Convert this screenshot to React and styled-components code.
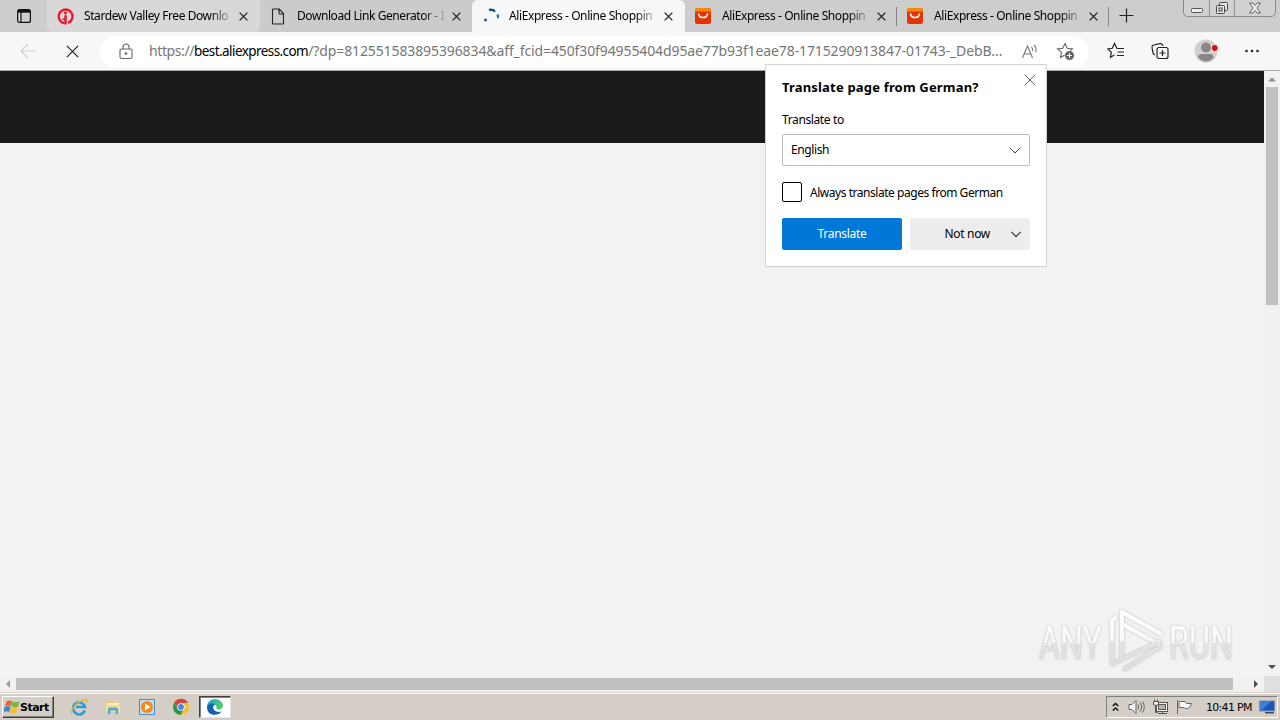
import React from 'react';
import styled, { createGlobalStyle } from 'styled-components';

const GlobalStyle = createGlobalStyle`
  * {
    box-sizing: border-box;
  }
  body {
    margin: 0;
    overflow: hidden;
    font-family: 'Noto Sans', 'Open Sans', sans-serif;
    font-size: 12px;
    color: #000;
  }
  svg {
    display: block;
    flex: none;
  }
  button {
    font: inherit;
    border: none;
    padding: 0;
    margin: 0;
  }
`;

const Desktop = styled.div`
  width: 1280px;
  height: 720px;
  display: flex;
  flex-direction: column;
  position: relative;
  overflow: hidden;
  background: #f2f2f2;
`;
const Text = styled.span`
  white-space: pre;
  letter-spacing: ${(p) => p.$spacing || 0}px;
`;

/* tab strip */
const TabStrip = styled.div`
  height: 32px;
  flex: none;
  display: flex;
  align-items: stretch;
  background: #cdcdcd;
`;
const TabMenu = styled.div`
  width: 47px;
  padding: 8px 0 0 16px;
`;
const Tab = styled.div`
  width: ${(p) => p.$width}px;
  display: flex;
  align-items: center;
  padding: 0 8px 0 10px;
  background: ${(p) => p.$bg || 'transparent'};
  border-radius: ${(p) => (p.$active ? '6px 6px 0 0' : '0 0 5px 5px')};
  border-right: 1px solid ${(p) => (p.$divider ? '#cdcdcd' : 'transparent')};
  position: relative;

  &::after {
    content: '';
    display: ${(p) => (p.$divider ? 'block' : 'none')};
    position: absolute;
    right: -1px;
    top: 7px;
    width: 1px;
    height: 19px;
    background: #858585;
  }
`;
const TabIcon = styled.div`
  width: 17px;
`;
const TabTitle = styled.div`
  width: 147px;
  margin: 0 8px 0 10px;
  line-height: 18px;
  white-space: nowrap;
  mask-image: linear-gradient(to right, #000 126px, transparent 151px);
`;
const NewTab = styled.div`
  padding: 8px 0 0 10px;
`;
const WindowButtons = styled.div`
  margin-left: auto;
  margin-right: 4px;
  width: 93px;
  height: 17px;
  display: flex;
  border: 1px solid #8a8a8a;
  border-top: none;
  border-radius: 0 0 5px 5px;
  background: #d1d1d1;
`;
const WindowButton = styled.div`
  width: ${(p) => p.$width}px;
  display: flex;
  justify-content: center;
  border-right: ${(p) => (p.$last ? 'none' : '1px solid #929292')};
`;

/* address bar */
const Toolbar = styled.div`
  height: 39px;
  flex: none;
  display: flex;
  align-items: center;
  background: #f7f7f7;
  border-bottom: 1px solid #a9a9a9;
  padding-left: 20px;
`;
const AddressBar = styled.div`
  width: 988px;
  height: 32px;
  margin-left: 21px;
  margin-top: 1px;
  border-radius: 16px;
  background: #fff;
  display: flex;
  align-items: center;
  padding-left: 18px;
`;
const Url = styled.div`
  width: 860px;
  margin-left: 15px;
  font-size: 14px;
  line-height: 20px;
  padding-bottom: 1px;
  color: #767676;
  white-space: nowrap;
`;
const Domain = styled(Text)`
  color: #000;
  font-size: 13.5px;
`;
const ToolIcon = styled.div`
  margin-left: ${(p) => p.$gap}px;
`;

/* page */
const Page = styled.div`
  height: 605px;
  flex: none;
  display: flex;
`;
const Content = styled.div`
  width: 1264px;
  background: #f2f2f2;
`;
const SiteHeader = styled.div`
  height: 72px;
  background: #1a1a1a;
`;
const VerticalScroll = styled.div`
  width: 16px;
  background: #f1f1f1;
  display: flex;
  flex-direction: column;
  align-items: center;
  justify-content: space-between;
  padding: 5px 0 7px;
`;
const VerticalThumb = styled.div`
  width: 12px;
  height: 218px;
  margin: 3px 0 auto;
  background: #c0c0c0;
`;
const HorizontalScroll = styled.div`
  height: 17px;
  flex: none;
  display: flex;
  align-items: center;
  background: #f1f1f1;
  padding-bottom: 2px;
`;
const HorizontalThumb = styled.div`
  width: 1217px;
  height: 12px;
  margin: 0 19px 0 4px;
  background: #c0c0c0;
`;
const Corner = styled.div`
  width: 16px;
  height: 17px;
  margin-left: auto;
  margin-bottom: -2px;
  background: #dfdfdf;
`;

/* translate popup */
const Popup = styled.div`
  position: absolute;
  left: 765px;
  top: 64px;
  width: 282px;
  height: 203px;
  padding: 13px 16px 16px;
  background: #fff;
  border: 1px solid #d2d2d2;
  display: flex;
  flex-direction: column;
`;
const PopupHeader = styled.div`
  display: flex;
  justify-content: space-between;
  height: 33px;
  align-items: flex-start;
`;
const Title = styled.h2`
  margin: 0;
  font-family: 'Noto Sans', sans-serif;
  font-size: 13px;
  font-weight: 700;
  line-height: 18px;
`;
const CloseIcon = styled.div`
  margin: -4px -6px 0 0;
`;
const Label = styled.label`
  line-height: 18px;
  margin-bottom: 5px;
`;
const Select = styled.div`
  height: 32px;
  flex: none;
  border: 1px solid #bcbcbc;
  border-radius: 2px;
  display: flex;
  align-items: center;
  justify-content: space-between;
  padding: 0 7px 1px 8px;
`;
const CheckRow = styled.div`
  display: flex;
  align-items: center;
  gap: 8px;
  margin: 16px 0;
  height: 20px;
`;
const Checkbox = styled.span`
  width: 20px;
  height: 20px;
  border: 1px solid #000;
  border-radius: 2px;
`;
const Buttons = styled.div`
  display: flex;
  gap: 8px;
`;
const Button = styled.button`
  width: 120px;
  height: 32px;
  display: flex;
  align-items: center;
  justify-content: ${(p) => (p.$primary ? 'center' : 'flex-end')};
  gap: 20px;
  padding-right: ${(p) => (p.$primary ? 0 : 8)}px;
  padding-bottom: 1px;
  border-radius: 2px;
  background: ${(p) => (p.$primary ? '#0078d7' : '#ededed')};
  color: ${(p) => (p.$primary ? '#fff' : '#000')};
`;

const Watermark = styled.div`
  position: absolute;
  left: 1032px;
  top: 606px;
`;

/* taskbar */
const Taskbar = styled.div`
  height: 28px;
  flex: none;
  display: flex;
  align-items: center;
  background: #d4cec6;
  border-top: 1px solid #fff;
  box-shadow: 0 -1px 0 #d6d2ca;
  padding: 0 2px 1px 2px;
`;
const StartButton = styled.div`
  width: 52px;
  height: 22px;
  display: flex;
  align-items: center;
  padding-left: 1px;
  font-family: 'DejaVu Sans', sans-serif;
  font-size: 11px;
  font-weight: 700;
  background: #d4cec6;
  border: 1px solid;
  border-color: #fff #404040 #404040 #fff;
  box-shadow: inset -1px -1px 0 #808080;
`;
const QuickLaunch = styled.div`
  display: flex;
  align-items: center;
  gap: 16px;
  margin: 0 0 0 16px;
`;
const RunningApp = styled.div`
  width: 32px;
  height: 22px;
  margin: 0 0 0 9px;
  display: flex;
  align-items: center;
  justify-content: center;
  background: #fff;
  border: 1px solid;
  border-color: #404040 #e8e4dc #e8e4dc #404040;
  box-shadow: inset 1px 1px 0 #808080;
`;
const Tray = styled.div`
  margin-left: auto;
  width: 172px;
  height: 22px;
  display: flex;
  align-items: center;
  border: 1px solid;
  border-color: #808080 #fff #fff #808080;
  padding-left: 5px;
`;
const Clock = styled.div`
  width: 50px;
  margin-left: 13px;
  font-family: 'DejaVu Sans', sans-serif;
  font-size: 11px;
`;

const Cross = ({ size = 9, color = '#222', width = 1.5 }) => (
  <svg width={size} height={size} viewBox="0 0 10 10" fill="none" stroke={color} strokeWidth={width}>
    <path d="M.7.7l8.6 8.6M9.3.7L.7 9.3" />
  </svg>
);

const Chevron = ({ color = '#444', width = 1.2, size = 14 }) => (
  <svg width={size} height={size} viewBox="0 0 14 14" fill="none" stroke={color} strokeWidth={width}>
    <path d="M1.5 4.5L7 10l5.5-5.5" />
  </svg>
);

const Arrow = ({ d, color = '#505050' }) => (
  <svg width="8" height="8" viewBox="0 0 8 8" fill={color}>
    <path d={d} />
  </svg>
);

const IGetIcon = () => (
  <svg width="17" height="17" viewBox="0 0 17 17" fill="none">
    <path d="M7.300 15.200A6.900 6.900 0 1 1 11 14.900" stroke="#f0122b" strokeWidth="2.300" />
    <path d="M8.500 7.300v9.200" stroke="#f0122b" strokeWidth="2.500" />
    <path d="M5.500 10.500q1.500 1.800 3 .8" stroke="#f0122b" strokeWidth="1.200" />
    <circle cx="8.500" cy="4.900" r="1.500" fill="#f0122b" />
  </svg>
);

const FileIcon = () => (
  <svg width="16" height="17" viewBox="0 0 16 17" fill="none" stroke="#222" strokeWidth="1.1">
    <path d="M3.200 1h6.100l4.200 4.500v9.800q0 .7-.7.7H3.200q-.7 0-.7-.7V1.700Q2.500 1 3.200 1M9 1v4.200q0 .8.8.8h3.700" />
  </svg>
);

const Spinner = () => (
  <svg width="17" height="17" viewBox="0 0 17 17" fill="none">
    <path d="M7 1.900q4-.8 6 1.800" stroke="#0c4a83" strokeWidth="2.200" />
    <path d="M15.300 6.500q1 1.500.6 3.500" stroke="#1c6cb3" strokeWidth="2.300" />
    <circle cx="3.500" cy="12" r="1.500" fill="#1d5788" />
  </svg>
);

const AliIcon = () => (
  <svg width="16" height="16" viewBox="0 0 16 16" fill="none">
    <rect width="16" height="16" rx="2.500" fill="#e43501" />
    <path d="M2.500 0h11Q16 0 16 2.500V3.500H0v-1Q0 0 2.500 0" fill="#f58a0b" />
    <path d="M3.500 6c1 4.800 8 4.800 9 0" stroke="#fff" strokeWidth="1.500" strokeLinecap="round" />
  </svg>
);

const STAR = 'M9 1.500l2.200 4.800 5.200.6-3.900 3.500 1 5.100L9 13l-4.500 2.500 1-5.100L1.600 6.900l5.200-.6z';

const tabs = [
  { title: 'Stardew Valley Free Downlo', icon: <IGetIcon />, bg: '#d8d8d8', width: 213, spacing: -0.42 },
  { title: 'Download Link Generator - I', icon: <FileIcon />, width: 212, bg: '#cbcbcb', spacing: -0.42 },
  { title: 'AliExpress - Online Shoppin', icon: <Spinner />, width: 213, bg: '#f7f7f7', active: true, spacing: -0.4 },
  { title: 'AliExpress - Online Shoppin', icon: <AliIcon />, width: 212, divider: true, spacing: -0.4 },
  { title: 'AliExpress - Online Shoppin', icon: <AliIcon />, width: 212, divider: true, spacing: -0.4 },
];

function TabBar() {
  return (
    <TabStrip>
      <TabMenu>
        <svg width="16" height="16" viewBox="0 0 16 16" fill="none" stroke="#111">
          <rect x="1.600" y="1.600" width="12.800" height="12.800" rx="2" strokeWidth="1.200" />
          <path d="M2 3.200h12" strokeWidth="3" />
          <path d="M5 4v10" strokeWidth="1.200" />
        </svg>
      </TabMenu>
      {tabs.map((tab, i) => (
        <Tab key={i} $width={tab.width} $bg={tab.bg} $active={tab.active} $divider={tab.divider}>
          <TabIcon>{tab.icon}</TabIcon>
          <TabTitle>
            <Text $spacing={tab.spacing}>{tab.title}</Text>
          </TabTitle>
          <Cross />
        </Tab>
      ))}
      <NewTab>
        <svg width="15" height="15" viewBox="0 0 15 15" stroke="#222" strokeWidth="1.200">
          <path d="M7.500.5v14M.5 7.500h14" />
        </svg>
      </NewTab>
      <WindowButtons>
        <WindowButton $width={26}>
          <svg width="14" height="16" viewBox="0 0 14 16" fill="#eee" stroke="#555">
            <rect x="1.500" y="8.500" width="11" height="4" rx="1" />
          </svg>
        </WindowButton>
        <WindowButton $width={25}>
          <svg width="14" height="16" viewBox="0 0 14 16" fill="#e6e6e6" stroke="#444">
            <rect x="4.500" y="2.500" width="8" height="8" rx="1" />
            <rect x="1.500" y="5.500" width="8" height="8" rx="1" />
            <rect x="4" y="8" width="3" height="3" />
          </svg>
        </WindowButton>
        <WindowButton $width={40} $last>
          <svg width="14" height="16" viewBox="0 0 14 16" fill="#eee" stroke="#555" strokeWidth=".9">
            <path d="M1.500 3h3.300L7 5.500 9.200 3h3.300L9 8l3.500 5H9.200L7 10.500 4.800 13H1.500L5 8z" />
          </svg>
        </WindowButton>
      </WindowButtons>
    </TabStrip>
  );
}

function NavBar() {
  return (
    <Toolbar>
      <svg width="17" height="16" viewBox="0 0 17 16" fill="none" stroke="#cfcfcf" strokeWidth="1.200">
        <path d="M16 8H1M8 1L1 8l7 7" />
      </svg>
      <ToolIcon $gap={29}>
        <Cross size={13} width={0.9} />
      </ToolIcon>
      <AddressBar>
        <svg width="16" height="18" viewBox="0 0 16 18" fill="none" stroke="#666" strokeWidth="1.100">
          <rect x="2" y="6" width="12" height="9.500" rx="1.500" />
          <path d="M5 6V4a3 3 0 0 1 6 0v2" />
          <circle cx="8" cy="10.500" r=".8" fill="#666" />
        </svg>
        <Url>
          <Text $spacing={-0.4}>https://</Text>
          <Domain $spacing={-0.57}>best.aliexpress.com</Domain>
          <Text $spacing={-0.11}>
            /?dp=812551583895396834&amp;aff_fcid=450f30f94955404d95ae77b93f1eae78-1715290913847-01743-_DebB...
          </Text>
        </Url>
        <ToolIcon $gap={12}>
          <svg width="18" height="18" viewBox="0 0 18 18" fill="none" stroke="#777" strokeWidth="1.100">
            <path d="M1.500 15L6.500 3l5 12M3.200 11h6.600M10.500 4q1.500 1.500 1 4M13 2q2.800 2.800 1.800 7" />
          </svg>
        </ToolIcon>
        <ToolIcon $gap={17}>
          <svg width="19" height="19" viewBox="0 0 19 19" fill="none" stroke="#666" strokeWidth="1.100">
            <path d={STAR} />
            <circle cx="13.500" cy="13.500" r="4.800" fill="#606060" stroke="#fff" strokeWidth=".6" />
            <path d="M13.500 11v5M11 13.500h5" stroke="#fff" />
          </svg>
        </ToolIcon>
      </AddressBar>
      <ToolIcon $gap={19}>
        <svg width="18" height="18" viewBox="0 0 18 18" fill="none" stroke="#222" strokeWidth="1.200">
          <path d="M12.500 6.500H10L7.500 1.500 5.300 6.300.8 6.900l3.500 3.300-.9 5.100 4.100-2.300M10 6.500h7M10.500 10H17M10 13.500h7" />
        </svg>
      </ToolIcon>
      <ToolIcon $gap={26}>
        <svg width="18" height="18" viewBox="0 0 18 18" fill="none" stroke="#222" strokeWidth="1.200">
          <path d="M4 13Q2.500 12.500 2 11L1 5.500Q.8 3.500 2.500 3L9 1.600Q11 1.300 11.600 3l.3 1" />
          <rect x="6" y="5.500" width="11" height="11" rx="2" fill="#f7f7f7" />
          <path d="M11.500 8v6M8.500 11h6" />
        </svg>
      </ToolIcon>
      <ToolIcon $gap={25}>
        <svg width="24" height="24" viewBox="0 0 24 24">
          <circle cx="12" cy="12" r="11.500" fill="#d2d0ce" />
          <circle cx="12" cy="8.500" r="5" fill="#8a8886" />
          <path d="M4 18.500q0-3.500 3.500-3.500h8.500q3.500 0 3.500 3.500Q16.500 22.500 12 22.500T4 18.500" fill="#8a8886" />
          <circle cx="20.800" cy="9" r="3.600" fill="#f7f7f7" />
          <circle cx="20.800" cy="9" r="2.900" fill="#d80d18" />
        </svg>
      </ToolIcon>
      <ToolIcon $gap={26}>
        <svg width="16" height="4" viewBox="0 0 16 4" fill="#222">
          <circle cx="2.500" cy="2" r="1.300" />
          <circle cx="8" cy="2" r="1.300" />
          <circle cx="13.500" cy="2" r="1.300" />
        </svg>
      </ToolIcon>
    </Toolbar>
  );
}

function TranslatePopup() {
  return (
    <Popup>
      <PopupHeader>
        <Title>
          <Text $spacing={0.18}>Translate page from German?</Text>
        </Title>
        <CloseIcon>
          <Cross size={12} width={0.8} color="#555" />
        </CloseIcon>
      </PopupHeader>
      <Label>
        <Text $spacing={-0.38}>Translate to</Text>
      </Label>
      <Select>
        <Text $spacing={-0.4}>English</Text>
        <Chevron width={1} />
      </Select>
      <CheckRow>
        <Checkbox />
        <Text $spacing={-0.46}>Always translate pages from German</Text>
      </CheckRow>
      <Buttons>
        <Button $primary>
          <Text $spacing={-0.3}>Translate</Text>
        </Button>
        <Button>
          <Text $spacing={-0.3}>Not now</Text>
          <Chevron size={12} width={1.500} />
        </Button>
      </Buttons>
    </Popup>
  );
}

const WatermarkText = styled.text`
  font-family: Roboto, sans-serif;
  font-size: 47px;
  font-weight: 400;
`;

function AnyRun() {
  return (
    <Watermark>
      <svg width="216" height="72" viewBox="0 0 216 72" fill="none">
        <defs>
          <linearGradient id="fade" x1="0" y1="0" x2="0" y2="1">
            <stop offset="0" stopColor="#fff" />
            <stop offset=".5" stopColor="#f8f8f8" />
            <stop offset=".52" stopColor="#e3e3e3" />
            <stop offset="1" stopColor="#dedede" />
          </linearGradient>
          <filter id="soft" x="-10%" y="-10%" width="120%" height="120%">
            <feDropShadow dx="0" dy="0" stdDeviation="1.300" floodColor="#8c8c8c" floodOpacity=".6" />
          </filter>
        </defs>
        <g filter="url(#soft)">
          <WatermarkText x="7" y="53" textLength="63" lengthAdjust="spacingAndGlyphs" fill="url(#fade)">
            ANY
          </WatermarkText>
          <WatermarkText x="137" y="53" textLength="64" lengthAdjust="spacingAndGlyphs" fill="url(#fade)">
            RUN
          </WatermarkText>
          <path
            d="M83 12l-3 2v44l47-22M90 51V6l39 22M90 18l36 20M93 63l36-23"
            stroke="url(#fade)"
            strokeWidth="4"
            strokeLinejoin="round"
            strokeLinecap="round"
          />
        </g>
      </svg>
    </Watermark>
  );
}

function StartBar() {
  return (
    <Taskbar>
      <StartButton>
        <svg width="16" height="16" viewBox="0 0 16 16">
          <path d="M2.500 2.500Q5.500.5 8 2.300L6.700 7.300Q4 5.800 1 7.400z" fill="#e8622a" />
          <path d="M8.500 2.500q3 1.500 7 0l-1.600 5.300Q11 9.300 7.200 7.500z" fill="#77b843" />
          <path d="M.8 8q3-1.600 5.700-.1L5 13.200Q2.500 11.500-.5 13z" fill="#3c83cf" />
          <path d="M7 8.400q3 1.500 6.700.1l-1.500 5.400q-3 1.500-6.600-.2z" fill="#f5be32" />
        </svg>
        <Text $spacing={-0.5}>Start</Text>
      </StartButton>
      <QuickLaunch>
        <svg width="18" height="18" viewBox="0 0 18 18" fill="none">
          <path d="M14.800 12.500A6 6 0 1 1 15 9H6" stroke="#2b9ad5" strokeWidth="2.600" />
          <path d="M2 16C-1 13 8 2.500 15 1.500q3-.2 1.500 3.500" stroke="#e3b53b" strokeWidth="1.300" />
        </svg>
        <svg width="18" height="18" viewBox="0 0 18 18">
          <path d="M2 3h6l1.500 1.500H16V14H2z" fill="#f0cb66" />
          <path d="M3.500 5H15v4H3.500z" fill="#fbf4cd" />
          <path d="M2 7h14v7H2z" fill="#f5dc8b" />
          <path d="M4 16V11q0-1.500 1.500-1.500h7Q14 9.500 14 11v5h-2.500v-3.500h-5V16z" fill="#58a9d5" />
        </svg>
        <svg width="18" height="18" viewBox="0 0 18 18">
          <rect x="1.500" y="1.500" width="15" height="15" fill="#c3dcef" stroke="#4b91c6" />
          <circle cx="9" cy="9" r="6" fill="#f58a1a" />
          <path d="M7 5.500v7L12.500 9z" fill="#fff" />
        </svg>
        <svg width="18" height="18" viewBox="0 0 18 18">
          <circle cx="9" cy="9" r="8" fill="#f2c232" />
          <path d="M2 5A8 8 0 0 1 16 5H9L6 11z" fill="#db4437" />
          <path d="M2 5A8 8 0 0 0 8.600 17L12 10.500 6 11z" fill="#259b52" />
          <circle cx="9" cy="9" r="3.800" fill="#fff" />
          <circle cx="9" cy="9" r="2.900" fill="#4285f4" />
        </svg>
      </QuickLaunch>
      <RunningApp>
        <svg width="18" height="18" viewBox="0 0 18 18">
          <defs>
            <linearGradient id="edge" x1="0" y1="0" x2="1" y2="0">
              <stop offset="0" stopColor="#1a9bd8" />
              <stop offset="1" stopColor="#58cf68" />
            </linearGradient>
          </defs>
          <path d="M1 9C1 4 5 1 9 1c5 0 8 3.500 8 6.500 0 2.500-2 4-4.500 4-2 0-2.500-.8-2-1.500C12 7 5 4.500 1 9" fill="url(#edge)" />
          <path d="M1 9c2-4.500 7-4 7.500-2C5 9.500 8.500 15.500 15.500 13.500 12 18.500 1 18.500 1 9" fill="#1262ae" />
        </svg>
      </RunningApp>
      <Tray>
        <svg width="7" height="10" viewBox="0 0 7 10" fill="none" stroke="#111" strokeWidth="1.400">
          <path d="M.8 4l2.700-2.500L6.200 4M.8 8.500L3.500 6l2.700 2.500" />
        </svg>
        <ToolIcon $gap={9}>
          <svg width="17" height="16" viewBox="0 0 17 16" fill="#f4f4f4" stroke="#666">
            <path d="M1 5.500h3l4-4v13l-4-4H1z" />
            <path d="M10 5.500q1.500 2.500 0 5M12.300 3.500q3 4.500 0 9M14.500 2.500q3.500 5.500 0 11" fill="none" />
          </svg>
        </ToolIcon>
        <ToolIcon $gap={7}>
          <svg width="17" height="16" viewBox="0 0 17 16" fill="#eee" stroke="#555">
            <rect x="4.500" y="3.500" width="11" height="9" fill="#f4f4f4" />
            <rect x="6.500" y="5.500" width="7" height="5" fill="#b5b5b5" />
            <path d="M6 14.500h9M10.500 13v1.500M3.500 6v7.500h2" fill="none" />
            <path d="M1.500 2.500h5v3q-2.500 2-5 0zM2.500.5v2M5.500.5v2" />
          </svg>
        </ToolIcon>
        <ToolIcon $gap={7}>
          <svg width="17" height="16" viewBox="0 0 17 16" fill="#fafafa" stroke="#666">
            <path d="M1.500 1v14M3 2.500h6l1.500 2h5q-1.500 5-4 5H9L8 8.500H3z" />
          </svg>
        </ToolIcon>
        <Clock>
          <Text $spacing={-0.7}>10:41 PM</Text>
        </Clock>
        <ToolIcon $gap={3}>
          <svg width="16" height="16" viewBox="0 0 16 16">
            <rect x=".5" y="2" width="15" height="10" fill="#1c58b3" stroke="#7893ac" />
            <path d="M1 2.500h11L3 11H1z" fill="#3d80d3" />
            <path d="M6 13h9v1.500H6z" fill="#3a4d62" />
          </svg>
        </ToolIcon>
      </Tray>
    </Taskbar>
  );
}

export default function App() {
  return (
    <Desktop>
      <GlobalStyle />
      <TabBar />
      <NavBar />
      <Page>
        <Content>
          <SiteHeader />
        </Content>
        <VerticalScroll>
          <Arrow d="M0 5.500L4 1.500l4 4z" color="#8a8a8a" />
          <VerticalThumb />
          <Arrow d="M0 4h8L4 8z" />
        </VerticalScroll>
      </Page>
      <HorizontalScroll>
        <ToolIcon $gap={4}>
          <Arrow d="M6 0v8L2 4z" color="#999" />
        </ToolIcon>
        <HorizontalThumb />
        <Arrow d="M2 0v8l4-4z" />
        <Corner />
      </HorizontalScroll>
      <StartBar />
      <AnyRun />
      <TranslatePopup />
    </Desktop>
  );
}
